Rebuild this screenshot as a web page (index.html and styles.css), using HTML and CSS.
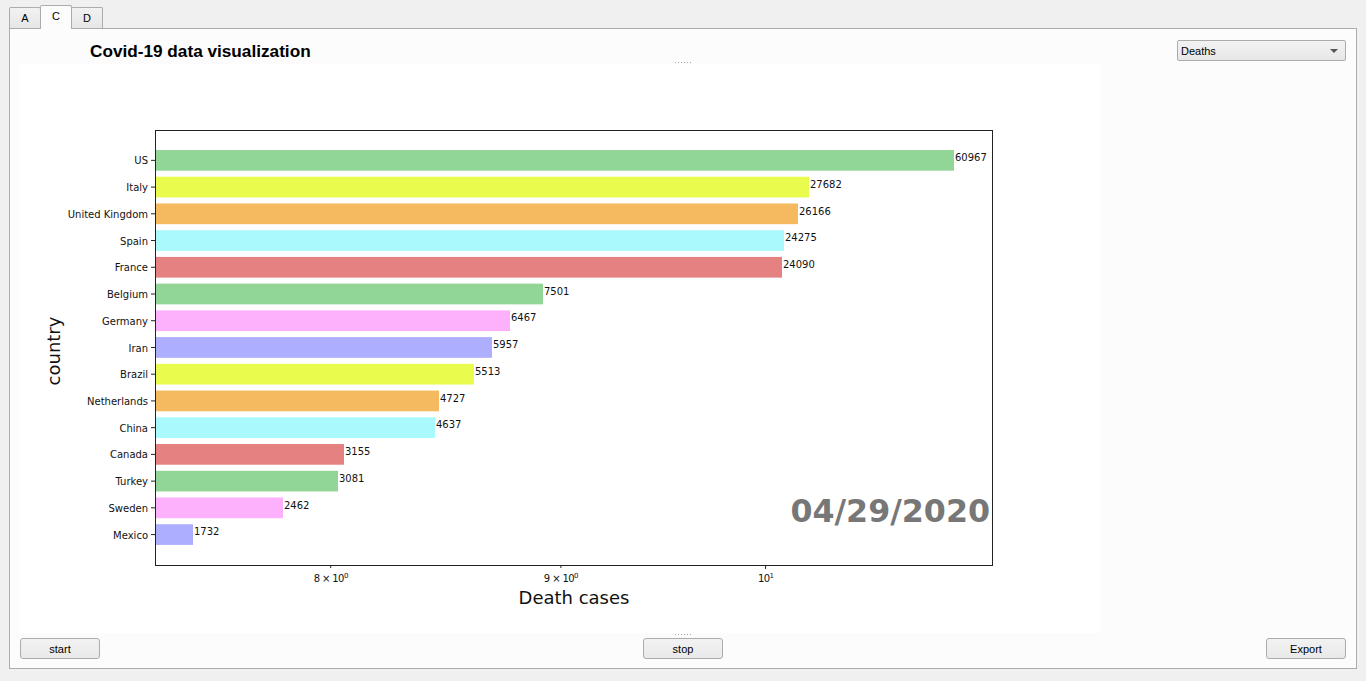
FILE: index.html
```html
<!DOCTYPE html>
<html>
<head>
<meta charset="utf-8">
<title>Covid-19 data visualization</title>
<link rel="stylesheet" href="styles.css">
</head>
<body>
<div class="tabbar">
  <div class="tab">A</div>
  <div class="tab active">C</div>
  <div class="tab">D</div>
</div>
<div class="panel">
  <div class="header">
    <h1 class="title">Covid-19 data visualization</h1>
    <div class="combo"><span>Deaths</span><span class="arrow"></span></div>
  </div>
  <div class="splitter top"><span class="dots"></span></div>
  <div class="chart">
    <svg class="plot" width="1080" height="569" viewBox="0 0 1080 569" xmlns="http://www.w3.org/2000/svg">
      <g class="bars">
        <rect x="135" y="86" width="799" height="20.7" fill="#91d597"/>
        <rect x="135" y="112.73" width="654" height="20.7" fill="#e9fb4d"/>
        <rect x="135" y="139.46" width="643" height="20.7" fill="#f5b95f"/>
        <rect x="135" y="166.19" width="629" height="20.7" fill="#aaf9fc"/>
        <rect x="135" y="192.92" width="627" height="20.7" fill="#e58281"/>
        <rect x="135" y="219.65" width="388" height="20.7" fill="#91d597"/>
        <rect x="135" y="246.38" width="355" height="20.7" fill="#fdb0fb"/>
        <rect x="135" y="273.11" width="337" height="20.7" fill="#adaefe"/>
        <rect x="135" y="299.84" width="319" height="20.7" fill="#e9fb4d"/>
        <rect x="135" y="326.57" width="284" height="20.7" fill="#f5b95f"/>
        <rect x="135" y="353.3" width="280" height="20.7" fill="#aaf9fc"/>
        <rect x="135" y="380.03" width="189" height="20.7" fill="#e58281"/>
        <rect x="135" y="406.76" width="183" height="20.7" fill="#91d597"/>
        <rect x="135" y="433.49" width="128" height="20.7" fill="#fdb0fb"/>
        <rect x="135" y="460.22" width="38" height="20.7" fill="#adaefe"/>
      </g>
      <g class="vals">
        <text x="935" y="97">60967</text>
        <text x="790" y="123.7">27682</text>
        <text x="779" y="150.5">26166</text>
        <text x="765" y="177.2">24275</text>
        <text x="763" y="203.9">24090</text>
        <text x="524" y="230.7">7501</text>
        <text x="491" y="257.4">6467</text>
        <text x="473" y="284.1">5957</text>
        <text x="455" y="310.8">5513</text>
        <text x="420" y="337.6">4727</text>
        <text x="416" y="364.3">4637</text>
        <text x="325" y="391">3155</text>
        <text x="319" y="417.8">3081</text>
        <text x="264" y="444.5">2462</text>
        <text x="174" y="471.2">1732</text>
      </g>
      <g class="ylabels">
        <text x="128" y="100.4">US</text>
        <text x="128" y="127.1">Italy</text>
        <text x="128" y="153.8">United Kingdom</text>
        <text x="128" y="180.5">Spain</text>
        <text x="128" y="207.3">France</text>
        <text x="128" y="234">Belgium</text>
        <text x="128" y="260.7">Germany</text>
        <text x="128" y="287.5">Iran</text>
        <text x="128" y="314.2">Brazil</text>
        <text x="128" y="340.9">Netherlands</text>
        <text x="128" y="367.7">China</text>
        <text x="128" y="394.4">Canada</text>
        <text x="128" y="421.1">Turkey</text>
        <text x="128" y="447.8">Sweden</text>
        <text x="128" y="474.6">Mexico</text>
      </g>
      <g class="ticks">
        <line x1="131" y1="96.35" x2="135" y2="96.35"/>
        <line x1="131" y1="123.08" x2="135" y2="123.08"/>
        <line x1="131" y1="149.81" x2="135" y2="149.81"/>
        <line x1="131" y1="176.54" x2="135" y2="176.54"/>
        <line x1="131" y1="203.27" x2="135" y2="203.27"/>
        <line x1="131" y1="230" x2="135" y2="230"/>
        <line x1="131" y1="256.73" x2="135" y2="256.73"/>
        <line x1="131" y1="283.46" x2="135" y2="283.46"/>
        <line x1="131" y1="310.19" x2="135" y2="310.19"/>
        <line x1="131" y1="336.92" x2="135" y2="336.92"/>
        <line x1="131" y1="363.65" x2="135" y2="363.65"/>
        <line x1="131" y1="390.38" x2="135" y2="390.38"/>
        <line x1="131" y1="417.11" x2="135" y2="417.11"/>
        <line x1="131" y1="443.84" x2="135" y2="443.84"/>
        <line x1="131" y1="470.57" x2="135" y2="470.57"/>
        <line x1="310.7" y1="501" x2="310.7" y2="504"/>
        <line x1="540.9" y1="501" x2="540.9" y2="504"/>
        <line x1="745.6" y1="501" x2="745.6" y2="505"/>
      </g>
      <rect class="axes" x="135.5" y="66.5" width="837" height="435"/>
      <g class="xlabels">
        <text x="310.7" y="518">8 × 10<tspan class="sup" dy="-4">0</tspan></text>
        <text x="540.9" y="518">9 × 10<tspan class="sup" dy="-4">0</tspan></text>
        <text x="745.6" y="518">10<tspan class="sup" dy="-4">1</tspan></text>
      </g>
      <text class="xtitle" x="554" y="540">Death cases</text>
      <text class="ytitle" x="40" y="287" transform="rotate(-90 40 287)">country</text>
      <text class="date" x="970" y="458">04/29/2020</text>
    </svg>
  </div>
  <div class="splitter bottom"><span class="dots"></span></div>
  <div class="buttons">
    <button class="btn">start</button>
    <button class="btn">stop</button>
    <button class="btn">Export</button>
  </div>
</div>
</body>
</html>
```
FILE: styles.css
```css
html, body {
  margin: 0;
  padding: 0;
  background: #f0f0f0;
  font-family: "Liberation Sans", Arial, sans-serif;
  font-size: 11px;
  color: #000;
}

.tabbar {
  display: flex;
  align-items: flex-end;
  height: 28px;
  padding-left: 9px;
}

.tab {
  box-sizing: border-box;
  width: 32px;
  height: 21px;
  border: 1px solid #acacac;
  border-bottom: none;
  border-radius: 2px 2px 0 0;
  background: linear-gradient(#f2f2f2, #e6e6e6);
  text-align: center;
  line-height: 20px;
  margin-right: -1px;
}

.tab.active {
  height: 24px;
  margin-bottom: -1px;
  background: #fcfcfc;
  position: relative;
  z-index: 1;
  line-height: 20px;
}

.panel {
  box-sizing: border-box;
  margin: 0 9px;
  height: 641px;
  border: 1px solid #acacac;
  background: #fcfcfc;
  display: flex;
  flex-direction: column;
}

.header {
  height: 32px;
  box-sizing: border-box;
  padding: 11px 10px 0 80px;
  display: flex;
  justify-content: space-between;
  align-items: flex-start;
}

.title {
  margin: 1px 0 0 0;
  font-family: "Liberation Sans", Arial, sans-serif;
  font-weight: bold;
  font-size: 17.2px;
  line-height: 20px;
}

.combo {
  box-sizing: border-box;
  width: 169px;
  height: 21px;
  border: 1px solid #acacac;
  border-radius: 2px;
  background: linear-gradient(#f2f2f2, #e8e8e8);
  display: flex;
  align-items: center;
  justify-content: space-between;
  padding: 1px 7px 0 3px;
  line-height: 18px;
}

.arrow {
  width: 0;
  height: 0;
  border-left: 4px solid transparent;
  border-right: 4px solid transparent;
  border-top: 4px solid #555;
}

.splitter {
  display: flex;
  justify-content: center;
  align-items: flex-start;
}

.splitter.top {
  height: 3px;
  padding-top: 1px;
  box-sizing: border-box;
}

.splitter.bottom {
  height: 5px;
  padding-top: 1px;
  box-sizing: border-box;
}

.dots {
  width: 17px;
  height: 1px;
  background: repeating-linear-gradient(to right, #a8a8a8 0 1px, transparent 1px 3px);
}

.chart {
  margin-left: 10px;
  width: 1080px;
  height: 569px;
  background: #fff;
}

.plot {
  display: block;
  font-family: "DejaVu Sans", sans-serif;
}

.vals text, .ylabels text, .xlabels text {
  font-size: 10px;
  fill: #111;
}

.ylabels text {
  text-anchor: end;
}

.xlabels text {
  text-anchor: middle;
  letter-spacing: -0.6px;
}

.xlabels .sup {
  font-size: 7px;
}

.ticks line {
  stroke: #222;
  stroke-width: 1;
}

.axes {
  fill: none;
  stroke: #222;
  stroke-width: 1;
}

.xtitle {
  font-size: 18px;
  text-anchor: middle;
  fill: #111;
}

.ytitle {
  font-size: 18px;
  text-anchor: middle;
  fill: #111;
}

.date {
  font-size: 31.7px;
  font-weight: bold;
  text-anchor: end;
  fill: #777;
}

.buttons {
  height: 21px;
  padding: 0 10px;
  display: flex;
  justify-content: space-between;
}

.btn {
  box-sizing: border-box;
  width: 80px;
  height: 21px;
  margin: 0;
  padding: 1px 0 0 0;
  border: 1px solid #acacac;
  border-radius: 3px;
  background: linear-gradient(#f2f2f2, #e9e9e9);
  font-family: "Liberation Sans", Arial, sans-serif;
  font-size: 11px;
  color: #000;
  line-height: 18px;
}
```
